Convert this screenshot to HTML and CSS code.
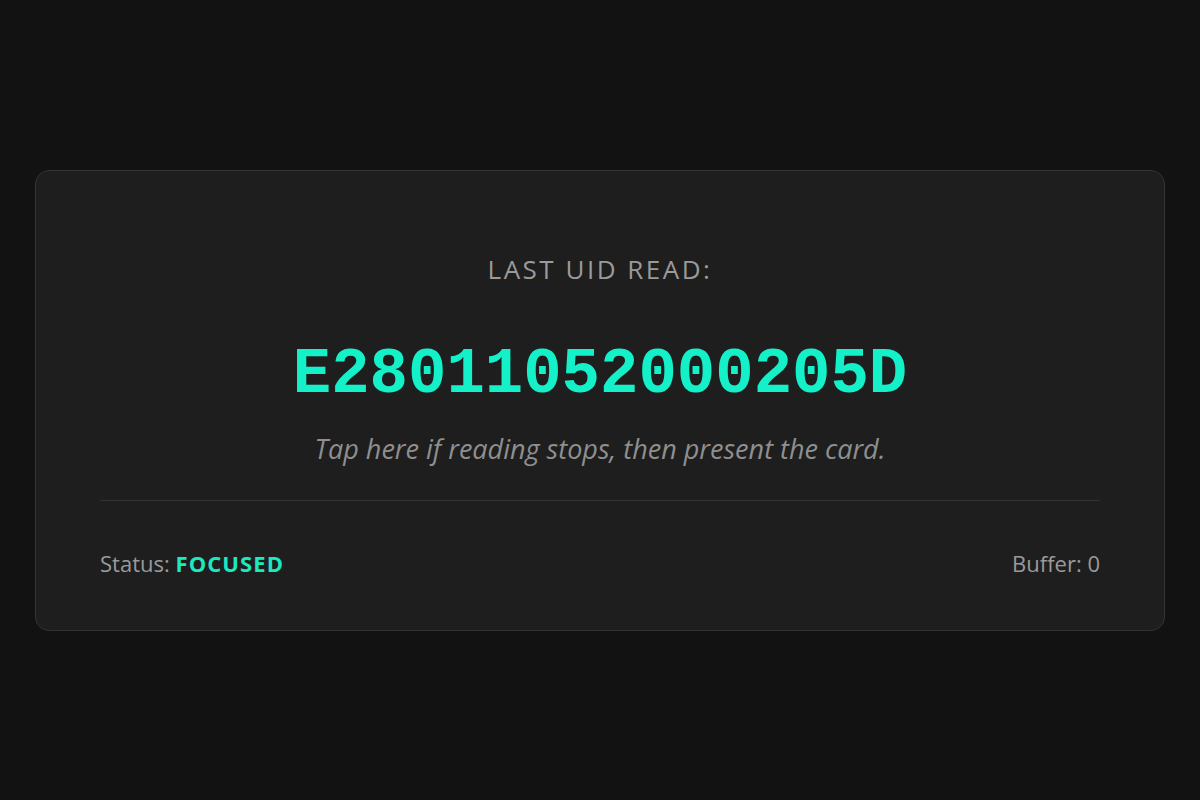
FILE: index.html
```html
<!DOCTYPE html>
<html>
<head>
<meta charset="utf-8">
<link rel="stylesheet" href="styles.css">
</head>
<body>
<div class="card">
  <div class="main">
    <div class="label">LAST UID READ:</div>
    <div class="uid">E28011052000205D</div>
    <div class="hint">Tap here if reading stops, then present the card.</div>
  </div>
  <div class="footer">
    <div class="status">Status: <span class="state">FOCUSED</span></div>
    <div class="buffer">Buffer: 0</div>
  </div>
</div>
</body>
</html>
```

FILE: styles.css
```css
html, body {
  margin: 0;
  height: 100%;
}
body {
  background: #121212;
  display: flex;
  align-items: center;
  justify-content: center;
  font-family: "Open Sans", "Noto Sans", sans-serif;
  color: #9a9a9a;
}
.card {
  box-sizing: border-box;
  width: 1130px;
  height: 461px;
  background: #1e1e1e;
  border: 1px solid #333;
  border-radius: 14px;
  padding: 64px 64px 0;
  display: flex;
  flex-direction: column;
}
.main {
  display: flex;
  flex-direction: column;
  align-items: center;
  border-bottom: 1px solid #333;
  padding-bottom: 31px;
}
.label {
  font-size: 26px;
  letter-spacing: 2.5px;
  line-height: 68px;
  color: #9a9a9a;
}
.uid {
  font-family: "Liberation Mono", "Courier New", monospace;
  font-weight: bold;
  font-size: 64px;
  line-height: 72px;
  margin-top: 36px;
  color: #14f0c8;
}
.hint {
  font-style: italic;
  font-size: 27px;
  line-height: 40px;
  margin-top: 18px;
  color: #8f8f8f;
}
.footer {
  display: flex;
  justify-content: space-between;
  align-items: center;
  height: 124px;
  font-size: 22px;
  color: #9a9a9a;
}
.state {
  font-weight: bold;
  letter-spacing: 1.1px;
  color: #1de9c0;
}
```
